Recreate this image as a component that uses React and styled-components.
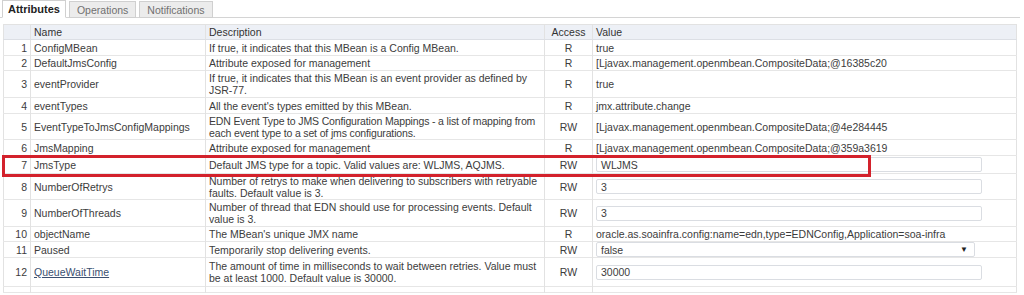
import React from 'react'
import styled, { createGlobalStyle } from 'styled-components'

const GlobalStyle = createGlobalStyle`
    html, body {
        margin: 0;
        padding: 0;
        background: #ffffff;
        font-family: "Liberation Sans", Arial, sans-serif;
        font-size: 10.5px;
        color: #3c3c3c;
    }
`

const Page = styled.div`
    width: 1024px;
    height: 295px;
    overflow: hidden;
    position: relative;
`

const TabStrip = styled.div`
    display: flex;
    align-items: flex-end;
    gap: 3px;
    height: 18px;
    padding-left: 2px;
    margin-right: 4px;
    border-bottom: 1px solid #d4d4d4;
    box-sizing: border-box;
`

const Tab = styled.div`
    height: ${p => p.active ? '18px' : '17px'};
    box-sizing: border-box;
    padding: 0 ${p => p.active ? '5px' : '7px'};
    display: flex;
    align-items: center;
    border: 1px solid #d0d0d0;
    border-bottom: ${p => p.active ? '1px solid #ffffff' : '1px solid #d0d0d0'};
    margin-bottom: -1px;
    background: ${p => p.active ? '#ffffff' : '#ececec'};
    color: ${p => p.active ? '#222222' : '#707070'};
    font-weight: ${p => p.active ? 'bold' : 'normal'};
    font-size: ${p => p.active ? '11px' : '10.5px'};
`

const TableWrap = styled.div`
    position: relative;
    margin: 6px 7px 0 3px;
`

const Table = styled.table`
    border-collapse: collapse;
    table-layout: fixed;
    width: 1014px;
    border: 1px solid #e2e2e2;
`

const HeadCell = styled.th`
    height: 14px;
    padding: 0 3px;
    background: #edf0f6;
    border-bottom: 1px solid #dcdfe5;
    border-left: 1px solid #e2e2e2;
    font-weight: normal;
    text-align: ${p => p.center ? 'center' : 'left'};
    color: #333333;
    white-space: nowrap;
`

const Row = styled.tr`
    height: ${p => p.h}px;
    border-bottom: 1px solid #e6e6e6;
`

const Cell = styled.td`
    padding: 0 3px;
    border-left: 1px solid #e2e2e2;
    line-height: 12px;
    vertical-align: middle;
    text-align: ${p => p.center ? 'center' : 'left'};
    white-space: nowrap;
    overflow: hidden;
    letter-spacing: ${p => p.tight ? '-0.15px' : 'normal'};
`

const NumCell = styled(Cell)`
    text-align: right;
    padding-right: 3px;
    border-left: none;
`

const NameLink = styled.a`
    color: #3a4f70;
    text-decoration: underline;
`

const TextInput = styled.div`
    width: 386px;
    height: 15px;
    box-sizing: border-box;
    border: 1px solid #dadde2;
    border-radius: 2px;
    padding: 0 4px;
    display: flex;
    align-items: center;
    background: #ffffff;
`

const SelectBox = styled(TextInput)`
    width: 379px;
    justify-content: space-between;
    padding-right: 6px;
`

const Arrow = styled.span`
    font-size: 8px;
    color: #222222;
`

const Highlight = styled.div`
    position: absolute;
    left: -1px;
    top: 131px;
    width: 869px;
    height: 22px;
    box-sizing: border-box;
    border: 3px solid #d3222c;
    pointer-events: none;
`

const rows = [
    { n: 1, name: 'ConfigMBean', desc: ['If true, it indicates that this MBean is a Config MBean.'], access: 'R', value: 'true', h: 16 },
    { n: 2, name: 'DefaultJmsConfig', desc: ['Attribute exposed for management'], access: 'R', value: '[Ljavax.management.openmbean.CompositeData;@16385c20', h: 15 },
    { n: 3, name: 'eventProvider', desc: ['If true, it indicates that this MBean is an event provider as defined by', 'JSR-77.'], access: 'R', value: 'true', h: 27 },
    { n: 4, name: 'eventTypes', desc: ["All the event's types emitted by this MBean."], access: 'R', value: 'jmx.attribute.change', h: 16 },
    { n: 5, name: 'EventTypeToJmsConfigMappings', tight: true, desc: ['EDN Event Type to JMS Configuration Mappings - a list of mapping from', 'each event type to a set of jms configurations.'], access: 'RW', value: '[Ljavax.management.openmbean.CompositeData;@4e284445', h: 26 },
    { n: 6, name: 'JmsMapping', desc: ['Attribute exposed for management'], access: 'R', value: '[Ljavax.management.openmbean.CompositeData;@359a3619', h: 16 },
    { n: 7, name: 'JmsType', desc: ['Default JMS type for a topic. Valid values are: WLJMS, AQJMS.'], access: 'RW', input: 'WLJMS', h: 18 },
    { n: 8, name: 'NumberOfRetrys', desc: ['Number of retrys to make when delivering to subscribers with retryable', 'faults. Default value is 3.'], access: 'RW', input: '3', h: 26 },
    { n: 9, name: 'NumberOfThreads', desc: ['Number of thread that EDN should use for processing events. Default', 'value is 3.'], access: 'RW', input: '3', h: 27 },
    { n: 10, name: 'objectName', desc: ["The MBean's unique JMX name"], access: 'R', value: 'oracle.as.soainfra.config:name=edn,type=EDNConfig,Application=soa-infra', h: 15 },
    { n: 11, name: 'Paused', desc: ['Temporarily stop delivering events.'], access: 'RW', select: 'false', h: 15 },
    { n: 12, name: 'QueueWaitTime', link: true, desc: ['The amount of time in milliseconds to wait between retries. Value must', 'be at least 1000. Default value is 30000.'], access: 'RW', input: '30000', h: 29 },
]

function ValueContent({ row }) {
    if (row.input !== undefined) return <TextInput>{row.input}</TextInput>
    if (row.select !== undefined) return <SelectBox>{row.select}<Arrow>▼</Arrow></SelectBox>
    return row.value
}

export default function App() {
    return (
        <Page>
            <GlobalStyle />
            <TabStrip>
                <Tab active>Attributes</Tab>
                <Tab>Operations</Tab>
                <Tab>Notifications</Tab>
            </TabStrip>
            <TableWrap>
                <Table>
                    <colgroup>
                        <col style={{ width: 27 }} />
                        <col style={{ width: 175 }} />
                        <col style={{ width: 339 }} />
                        <col style={{ width: 48 }} />
                        <col />
                    </colgroup>
                    <thead>
                        <tr>
                            <HeadCell style={{ borderLeft: 'none' }}></HeadCell>
                            <HeadCell>Name</HeadCell>
                            <HeadCell>Description</HeadCell>
                            <HeadCell center>Access</HeadCell>
                            <HeadCell>Value</HeadCell>
                        </tr>
                    </thead>
                    <tbody>
                        {rows.map(r => (
                            <Row key={r.n} h={r.h}>
                                <NumCell>{r.n}</NumCell>
                                <Cell>{r.link ? <NameLink>{r.name}</NameLink> : r.name}</Cell>
                                <Cell tight={r.tight}>
                                    {r.desc.map((line, i) => (
                                        <React.Fragment key={i}>{i > 0 && <br />}{line}</React.Fragment>
                                    ))}
                                </Cell>
                                <Cell center>{r.access}</Cell>
                                <Cell><ValueContent row={r} /></Cell>
                            </Row>
                        ))}
                        <Row h={6}>
                            <NumCell></NumCell><Cell></Cell><Cell></Cell><Cell></Cell><Cell></Cell>
                        </Row>
                    </tbody>
                </Table>
                <Highlight />
            </TableWrap>
        </Page>
    )
}
